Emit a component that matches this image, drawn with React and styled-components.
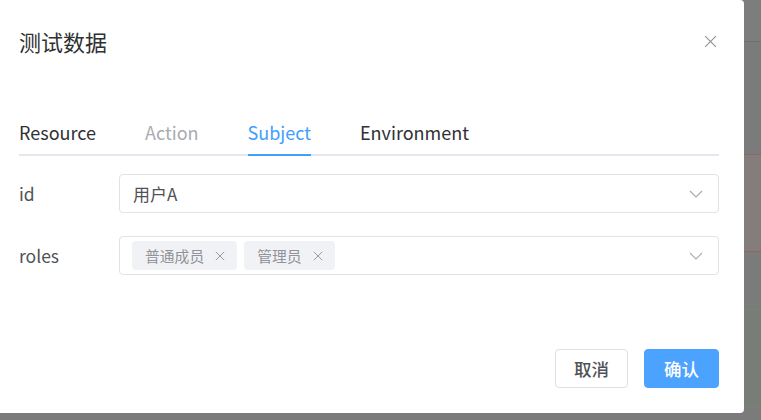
import React from 'react'
import styled, { createGlobalStyle, css } from 'styled-components'

const GlobalStyle = createGlobalStyle`
    html, body {
        margin: 0;
        padding: 0;
        background: #7b7b7b;
        font-family: "Noto Sans CJK SC", "Noto Sans", sans-serif;
    }
`

const Page = styled.div`
    position: relative;
    width: 761px;
    height: 420px;
    overflow: hidden;
    background: #7b7b7b;
`

// page behind the overlay
const Behind = styled.div`
    display: flex;
    flex-direction: column;
    padding-left: 600px;
`

const BehindHeader = styled.div`
    height: 41px;
    border-bottom: 1px solid #707070;
    background: #7d7d7d;
`

const BehindCard = styled.div`
    margin-top: ${props => props.$top}px;
    height: 96px;
    background: ${props => props.$bg};
    border-top: 1px solid ${props => props.$line};
    border-bottom: 1px solid ${props => props.$line};
`

// dialog
const Dialog = styled.div`
    position: absolute;
    top: 0;
    left: 0;
    width: 744px;
    height: 413px;
    background: #fff;
    border-radius: 0 4px 4px 0;
    display: flex;
    flex-direction: column;
    box-sizing: border-box;
`

const Header = styled.div`
    height: 82px;
    display: flex;
    align-items: center;
    justify-content: space-between;
    padding: 0 22px 0 19px;
`

const Title = styled.h2`
    margin: 0;
    font-size: 22px;
    font-weight: 400;
    color: #303133;
    line-height: 29px;
`

const CloseButton = styled.button`
    width: 24px;
    height: 24px;
    padding: 0;
    border: none;
    background: none;
    display: flex;
    align-items: center;
    justify-content: center;
    color: #909399;
    cursor: pointer;
`

const TabBar = styled.div`
    position: relative;
    display: flex;
    height: 48px;
    margin: 26px 25px 18px 19px;
    &::before {
        content: '';
        position: absolute;
        left: 0;
        right: 0;
        bottom: 0;
        height: 2px;
        background: #e4e7ed;
    }
`

const Tab = styled.div`
    position: relative;
    display: flex;
    align-items: center;
    padding: 0 24.5px;
    font-size: 18px;
    color: #303133;
    cursor: pointer;
    &:first-child { padding-left: 0; }
    &:last-child { padding-right: 0; }
    ${props => props.$disabled && css`
        color: #a8abb2;
        cursor: not-allowed;
    `}
    ${props => props.$active && css`
        color: #409eff;
        &::after {
            content: '';
            position: absolute;
            left: 24.5px;
            right: 24.5px;
            bottom: 0;
            height: 2px;
            background: #409eff;
            z-index: 1;
        }
    `}
`

const Form = styled.div`
    padding: 0 25px 0 19px;
`

const FormItem = styled.div`
    display: flex;
    align-items: center;
    margin-bottom: 23px;
`

const Label = styled.label`
    width: 100px;
    flex-shrink: 0;
    font-size: 17.5px;
    color: #505256;
`

const Select = styled.div`
    flex: 1;
    height: 39px;
    box-sizing: border-box;
    border: 1px solid #dfe2e8;
    border-radius: 4px;
    display: flex;
    align-items: center;
    padding: 0 15px 0 ${props => props.$tags ? 12 : 13}px;
    gap: 7px;
`

const SelectValue = styled.span`
    flex: 1;
    font-size: 17px;
    color: #505256;
`

const Tags = styled.div`
    flex: 1;
    display: flex;
    gap: 7px;
`

const Tag = styled.span`
    height: 29px;
    display: inline-flex;
    align-items: center;
    gap: 11px;
    padding: 0 12px 0 13px;
    border-radius: 4px;
    background: #f0f2f5;
    color: #909399;
    font-size: 14.8px;
`

const Arrow = styled.span`
    display: flex;
    color: #a8abb2;
`

const Footer = styled.div`
    margin-top: auto;
    display: flex;
    justify-content: flex-end;
    gap: 16px;
    padding: 0 25px 25px 0;
`

const Button = styled.button`
    height: 39px;
    padding: 0 ${props => props.$primary ? 19 : 18}px;
    border-radius: 4px;
    font-family: inherit;
    font-size: 17.5px;
    font-weight: 500;
    cursor: pointer;
    border: 1px solid ${props => props.$primary ? '#4ca2ff' : '#dcdfe6'};
    background: ${props => props.$primary ? '#4ca2ff' : '#fff'};
    color: ${props => props.$primary ? '#fff' : '#505256'};
`

const CloseIcon = ({ size = 13 }) => (
    <svg width={size} height={size} viewBox="0 0 12 12" fill="none" stroke="currentColor" strokeWidth="1.1">
        <path d="M1 1 L11 11 M11 1 L1 11" />
    </svg>
)

const ChevronDown = () => (
    <svg width="14" height="8" viewBox="0 0 14 8" fill="none" stroke="currentColor" strokeWidth="1.1">
        <path d="M1 1 L7 7 L13 1" />
    </svg>
)

const tabs = [
    { name: 'Resource' },
    { name: 'Action', disabled: true },
    { name: 'Subject', active: true },
    { name: 'Environment' },
]

const roles = ['普通成员', '管理员']

const App = () => {
    return (
        <Page>
            <GlobalStyle />
            <Behind>
                <BehindHeader />
                <BehindCard $top={112} $bg="#857c7c" $line="#8d6868" />
                <BehindCard $top={57} $bg="#797d77" $line="#6f8a68" />
            </Behind>

            <Dialog>
                <Header>
                    <Title>测试数据</Title>
                    <CloseButton>
                        <CloseIcon />
                    </CloseButton>
                </Header>

                <TabBar>
                    {tabs.map(t => (
                        <Tab key={t.name} $active={t.active} $disabled={t.disabled}>{t.name}</Tab>
                    ))}
                </TabBar>

                <Form>
                    <FormItem>
                        <Label>id</Label>
                        <Select>
                            <SelectValue>用户A</SelectValue>
                            <Arrow><ChevronDown /></Arrow>
                        </Select>
                    </FormItem>
                    <FormItem>
                        <Label>roles</Label>
                        <Select $tags>
                            <Tags>
                                {roles.map(r => (
                                    <Tag key={r}>
                                        {r}
                                        <CloseIcon size={10} />
                                    </Tag>
                                ))}
                            </Tags>
                            <Arrow><ChevronDown /></Arrow>
                        </Select>
                    </FormItem>
                </Form>

                <Footer>
                    <Button>取消</Button>
                    <Button $primary>确认</Button>
                </Footer>
            </Dialog>
        </Page>
    )
}

export default App
